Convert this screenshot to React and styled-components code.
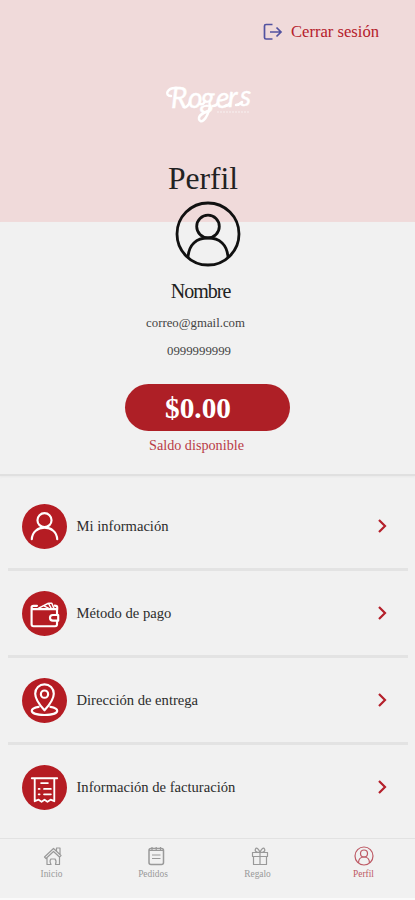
import React from "react";
import styled, { createGlobalStyle } from "styled-components";

const GlobalStyle = createGlobalStyle`
  * { box-sizing: border-box; }
  body { margin: 0; background: #f1f1f1; }
`;

const Screen = styled.main`
  display: flex;
  flex-direction: column;
  width: 415px;
  height: 900px;
  overflow: hidden;
  background: #f1f1f1;
  border-bottom: 2px solid #fafafa;
  font-family: "Liberation Serif", "Times New Roman", serif;
  color: #222;
`;

const Hero = styled.header`
  display: flex;
  flex-direction: column;
  height: 222px;
  flex: none;
  background: #f0dada;
`;

const Logout = styled.button`
  display: flex;
  align-items: center;
  align-self: flex-end;
  gap: 8px;
  height: 24px;
  margin: 20px 36px 0 0;
  padding: 0;
  border: 0;
  background: none;
  font: 16.6px/24px "Liberation Serif", serif;
  color: #b5202b;
`;

const Brand = styled.svg`
  display: block;
  width: 96px;
  height: 50px;
  margin: 34px 0 0 162px;
  flex: none;
`;

const Title = styled.h1`
  width: 406px;
  margin: 32px 0 0;
  font-size: 31.6px;
  line-height: 38px;
  font-weight: 400;
  text-align: center;
`;

const Account = styled.section`
  display: flex;
  flex-direction: column;
  align-items: center;
  height: 254px;
  flex: none;
  border-bottom: 2px solid #e0e0e0;
  box-shadow: 0 1px 2px #e8e8e8;
`;

const Avatar = styled.svg`
  display: block;
  width: 66px;
  height: 66px;
  margin-top: -21px;
  flex: none;
`;

const Line = styled.p`
  margin: ${(p) => p.$top}px 0 0;
  padding-right: ${(p) => p.$shift}px;
  font-size: ${(p) => p.$size}px;
  line-height: 20px;
  letter-spacing: ${(p) => p.$spacing || 0}px;
  color: ${(p) => p.$color || "#444"};
`;

const Balance = styled.div`
  display: flex;
  align-items: center;
  justify-content: center;
  width: 165px;
  height: 47px;
  margin-top: 23px;
  padding: 2px 19px 0 0;
  flex: none;
  border-radius: 24px;
  background: #ae1f26;
  color: #fff;
  font-size: 29.3px;
  font-weight: 700;
`;

const Menu = styled.nav`
  display: flex;
  flex-direction: column;
  height: 362px;
  padding: 8px 7px 0 8px;
  flex: none;
`;

const Row = styled.button`
  display: grid;
  grid-template-columns: 45px 1fr 12px;
  align-items: center;
  column-gap: 9.5px;
  height: 87px;
  flex: none;
  padding: 0 20.5px 0 14px;
  border: 0;
  border-bottom: 3px solid ${(p) => (p.$last ? "transparent" : "#e3e3e3")};
  background: none;
  font: 14.6px/20px "Liberation Serif", serif;
  color: #2c2c2c;
  text-align: left;
`;

const RowIcon = styled.svg`
  display: block;
  width: 45px;
  height: 45px;
  fill: none;
  stroke: #fff;
  stroke-width: 2.2;
  stroke-linecap: round;
  stroke-linejoin: round;
`;

const Chevron = styled.svg`
  display: block;
  width: 12px;
  height: 16px;
  fill: none;
  stroke: #b5202b;
  stroke-width: 2.2;
`;

const TabBar = styled.nav`
  display: grid;
  grid-template-columns: 103px 100px 109px 103px;
  height: 60px;
  flex: none;
  border-top: 1px solid #e2e2e2;
`;

const Tab = styled.button`
  display: flex;
  flex-direction: column;
  align-items: center;
  padding: 7px 0 0;
  border: 0;
  background: none;
  font: 9.4px/12px "Liberation Serif", serif;
  color: ${(p) => (p.$active ? "#bd5964" : "#999")};
`;

const TabIcon = styled.svg`
  display: block;
  width: 20px;
  height: 20px;
  margin: 0 0 2px ${(p) => p.$nudge || 0}px;
  fill: none;
  stroke: currentColor;
  stroke-width: 1.2;
  stroke-linejoin: round;
`;

const LogoutIcon = styled.svg`
  display: block;
  width: 20px;
  height: 18px;
  fill: none;
  stroke: #5252a0;
  stroke-width: 1.7;
`;

const drawings = {
  person: (
    <>
      <circle cx="23" cy="16.500" r="7.200" />
      <path d="M10 36c.5-7.500 6-11.800 13-11.800S35.500 28.500 36 36" />
    </>
  ),
  wallet: (
    <>
      <path d="M9.800 18v16q0 2 2 2h22q2 0 2-2V20q0-1.500-1.500-1.500H11.500q-1.700 0-1.700-1.500 0-1.800 2-1.800h3.500M36 19v-2.500q0-1.500-2.500-1.500" />
      <path d="m17 17.500 10-5 3 5.500M22 15l5 2.500M28 12.500h2.500l2 5" strokeWidth="1.500" />
      <path d="M37 24.500h-5.500a2.900 2.900 0 0 0 0 5.800H37z" fill="#b51c23" />
    </>
  ),
  pin: (
    <>
      <path d="M23 33S13.500 22.500 13.500 16a9.500 9.500 0 0 1 19 0C32.500 22.500 23 33 23 33Z" />
      <circle cx="23" cy="16.500" r="3.700" />
      <path d="M17 29.500c-4 .7-7 2-7 4 0 2.700 5.500 4.300 13 4.300s13-1.600 13-4.300c0-2-3-3.300-7-4" />
    </>
  ),
  invoice: (
    <>
      <path d="M10 13.500h26M13 14v23l4-1.500 3 2 3-2 3 2 3.200-2 3.800 1.500V14" strokeWidth="1.900" />
      <path d="M19.500 18.500h7M22.500 24.500h7M22.500 30h7M17 24.500h1M17 30h1" strokeWidth="1.800" />
    </>
  ),
};

const rows = [
  ["person", "Mi información"],
  ["wallet", "Método de pago"],
  ["pin", "Dirección de entrega"],
  ["invoice", "Información de facturación"],
];

const tabs = [
  {
    label: "Inicio",
    nudge: 3,
    art: <path d="m1.500 11 9-8.500 7.500 7-1.500 1.500-6-5.500L3 12.500zM4 12v6.500h4c-1.500-3-.5-5 0-5.500h4c1.500 1.500 1 4 .5 5.500h4V11M13.500 5V2h3.500v6.500" />,
  },
  {
    label: "Pedidos",
    nudge: 6,
    art: (
      <>
        <rect x="3" y="2.500" width="14.500" height="16" rx="2" strokeWidth="1.500" />
        <path d="M3 4.500h14.500M6 1v3M10.200 1v3M14.500 1v3M6 9h8.500M6 12.500h8.500" />
      </>
    ),
  },
  {
    label: "Regalo",
    nudge: 5,
    art: (
      <path d="M2.500 6.500h15v4h-15zM3.500 10.500h13v8h-13zM10 6.500v12M10 6.500C6 6.500 4.500 5 5.500 3s3.500 0 4.500 3.500M10 6.500c4 0 5.500-1.500 4.500-3.500S11 3 10 6.500" />
    ),
  },
  {
    label: "Perfil",
    active: true,
    art: (
      <>
        <circle cx="10" cy="10" r="9" />
        <circle cx="10" cy="7.500" r="3.500" />
        <path d="M4.500 17c0-3.800 2-6 5.500-6s5.500 2.200 5.500 6" />
      </>
    ),
  },
];

export default function App() {
  return (
    <>
      <GlobalStyle />
      <Screen>
        <Hero>
          <Logout>
            <LogoutIcon viewBox="0 0 20 18">
              <path d="M9.500 1.500H3Q1.500 1.500 1.500 3v11.500Q1.500 16 3 16h6.500M7 9h11M13.500 4.500 18 9l-4.500 4.500" />
            </LogoutIcon>
            Cerrar sesión
          </Logout>
          <Brand viewBox="0 0 96 50" role="img" aria-label="Rogers">
            <text
              x="9 26 39 54 66 78"
              y="30 30 30 30 29 28"
              fill="#fff"
              stroke="#fff"
              strokeWidth=".4"
              fontFamily="Lato, sans-serif"
              fontSize="28"
              fontStyle="italic"
              fontWeight="400"
            >
              Rogers
            </text>
            <path
              d="M15 10C5 9 2 18 9 18M22 29q3 1 6-5M38 26q4 1 5-3M51 28q3 0 5-3M63 28q3 0 5-3M74 27q3 0 6-3M48 28C45 43 38 46 37 41c-.5-4 4-6 9-8"
              fill="none"
              stroke="#fff"
              strokeWidth="2.500"
              strokeLinecap="round"
            />
            <path d="M55 34h33" stroke="#fff" strokeWidth="1.200" strokeDasharray="2 1" opacity=".6" />
          </Brand>
          <Title>Perfil</Title>
        </Hero>
        <Account>
          <Avatar viewBox="0 0 66 66" fill="none" stroke="#111" strokeWidth="2.800">
            <circle cx="33" cy="33" r="31" />
            <circle cx="33" cy="25.500" r="11.300" />
            <path d="M13 56c1-12 8-19 20-19s19 7 20 19" />
          </Avatar>
          <Line $top={14} $shift={14} $size={20} $spacing={-1} $color="#222">Nombre</Line>
          <Line $top={12} $shift={24} $size={12.8}>correo@gmail.com</Line>
          <Line $top={8} $shift={17} $size={12.8}>0999999999</Line>
          <Balance>$0.00</Balance>
          <Line $top={4} $shift={22} $size={14.2} $color="#b93c47">Saldo disponible</Line>
        </Account>
        <Menu>
          {rows.map(([icon, label], i) => (
            <Row key={label} $last={i === rows.length - 1}>
              <RowIcon viewBox="0 0 46 46">
                <circle cx="23" cy="23" r="23" fill="#b51c23" stroke="none" />
                {drawings[icon]}
              </RowIcon>
              {label}
              <Chevron viewBox="0 0 12 16">
                <path d="m3 2 6 6-6 6" />
              </Chevron>
            </Row>
          ))}
        </Menu>
        <TabBar>
          {tabs.map((tab) => (
            <Tab key={tab.label} $active={tab.active}>
              <TabIcon viewBox="0 0 20 20" $nudge={tab.nudge}>{tab.art}</TabIcon>
              {tab.label}
            </Tab>
          ))}
        </TabBar>
      </Screen>
    </>
  );
}
